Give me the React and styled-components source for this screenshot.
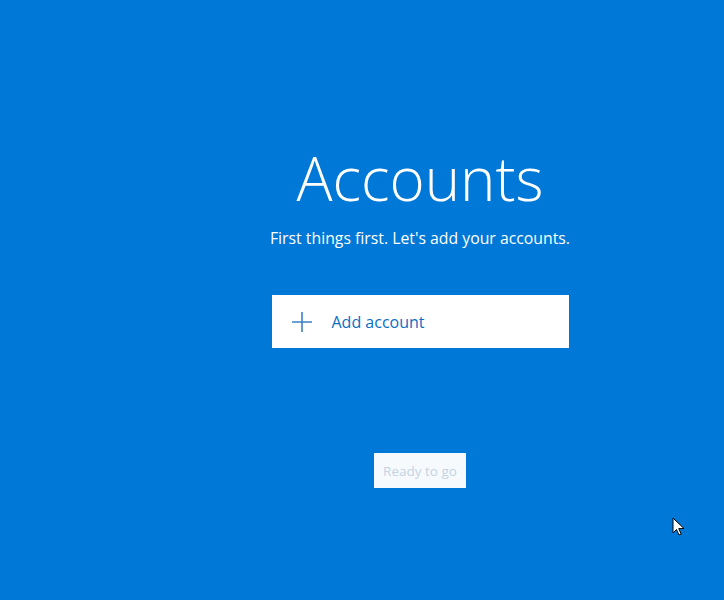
import React from "react";
import styled, { createGlobalStyle } from "styled-components";

const GlobalStyle = createGlobalStyle`
  html, body {
    margin: 0;
    padding: 0;
    background: #0078d7;
  }
  body {
    font-family: "Open Sans", "Noto Sans", sans-serif;
  }
`;

const Screen = styled.div`
  position: relative;
  width: 724px;
  height: 600px;
  background: #0078d7;
  overflow: hidden;
  display: flex;
  flex-direction: column;
  align-items: center;
  padding-left: 116px;
  box-sizing: border-box;
`;

const Title = styled.h1`
  margin: 138px 0 0;
  font-size: 60px;
  font-weight: 300;
  line-height: 80px;
  color: #ffffff;
`;

const Subtitle = styled.p`
  margin: 9px 0 0;
  font-size: 15.8px;
  line-height: 22px;
  color: #ffffff;
`;

const AddButton = styled.button`
  margin-top: 46px;
  width: 297px;
  height: 53px;
  border: 0;
  background: #ffffff;
  display: flex;
  align-items: center;
  gap: 20px;
  padding: 0 0 0 20px;
  font-family: inherit;
  font-size: 16px;
  color: #0a6ec4;
  cursor: pointer;
`;

const PlusIcon = styled.svg`
  width: 20px;
  height: 20px;
  flex: none;
`;

const ReadyButton = styled.button`
  margin-top: 105px;
  width: 92px;
  height: 35px;
  border: 0;
  background: #f7fafd;
  font-family: inherit;
  font-size: 13.5px;
  color: #c3d3e3;
  padding: 0;
`;

const Cursor = styled.svg`
  position: absolute;
  left: 672px;
  top: 517px;
  width: 13px;
  height: 20px;
`;

export default function App() {
  return (
    <>
      <GlobalStyle />
      <Screen>
        <Title>Accounts</Title>
        <Subtitle>First things first. Let's add your accounts.</Subtitle>
        <AddButton>
          <PlusIcon viewBox="0 0 20 20">
            <path d="M10 0v20M0 10h20" stroke="#3b82c4" strokeWidth="1.6" fill="none" />
          </PlusIcon>
          Add account
        </AddButton>
        <ReadyButton disabled>Ready to go</ReadyButton>
        <Cursor viewBox="0 0 13 20">
          <path
            d="M1 1v15l3.5-3.5 2.5 5.5 2.2-1-2.5-5.4H12z"
            fill="#ffffff"
            stroke="#000000"
            strokeWidth="1"
            strokeLinejoin="round"
          />
        </Cursor>
      </Screen>
    </>
  );
}
